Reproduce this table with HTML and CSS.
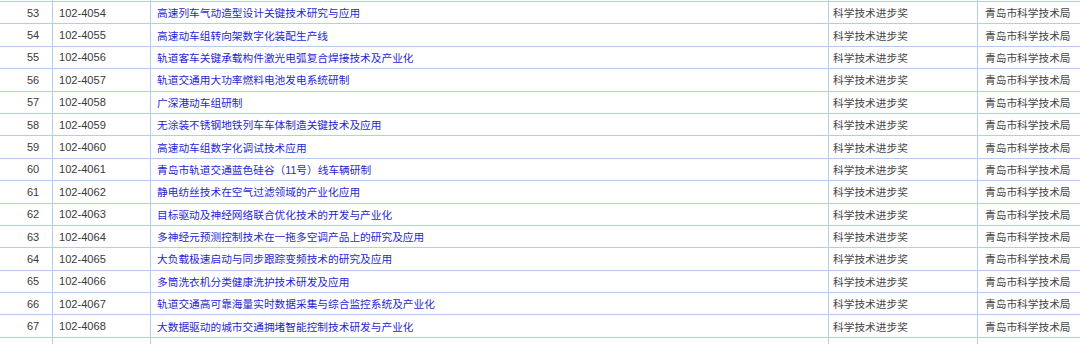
FILE: index.html
```html
<!DOCTYPE html>
<html lang="zh-CN">
<head>
<meta charset="utf-8">
<title>项目列表</title>
<link rel="stylesheet" href="styles.css">
</head>
<body>
<div class="viewport">
  <div class="table">
    <div class="row ghost"><div class="c1"></div><div class="c2"></div><div class="c3"></div><div class="c4"></div><div class="c5"></div></div>
    <div class="row"><div class="c1">53</div><div class="c2">102-4054</div><div class="c3">高速列车气动造型设计关键技术研究与应用</div><div class="c4">科学技术进步奖</div><div class="c5">青岛市科学技术局</div></div>
    <div class="row"><div class="c1">54</div><div class="c2">102-4055</div><div class="c3">高速动车组转向架数字化装配生产线</div><div class="c4">科学技术进步奖</div><div class="c5">青岛市科学技术局</div></div>
    <div class="row"><div class="c1">55</div><div class="c2">102-4056</div><div class="c3">轨道客车关键承载构件激光电弧复合焊接技术及产业化</div><div class="c4">科学技术进步奖</div><div class="c5">青岛市科学技术局</div></div>
    <div class="row"><div class="c1">56</div><div class="c2">102-4057</div><div class="c3">轨道交通用大功率燃料电池发电系统研制</div><div class="c4">科学技术进步奖</div><div class="c5">青岛市科学技术局</div></div>
    <div class="row"><div class="c1">57</div><div class="c2">102-4058</div><div class="c3">广深港动车组研制</div><div class="c4">科学技术进步奖</div><div class="c5">青岛市科学技术局</div></div>
    <div class="row"><div class="c1">58</div><div class="c2">102-4059</div><div class="c3">无涂装不锈钢地铁列车车体制造关键技术及应用</div><div class="c4">科学技术进步奖</div><div class="c5">青岛市科学技术局</div></div>
    <div class="row"><div class="c1">59</div><div class="c2">102-4060</div><div class="c3">高速动车组数字化调试技术应用</div><div class="c4">科学技术进步奖</div><div class="c5">青岛市科学技术局</div></div>
    <div class="row"><div class="c1">60</div><div class="c2">102-4061</div><div class="c3">青岛市轨道交通蓝色硅谷（11号）线车辆研制</div><div class="c4">科学技术进步奖</div><div class="c5">青岛市科学技术局</div></div>
    <div class="row"><div class="c1">61</div><div class="c2">102-4062</div><div class="c3">静电纺丝技术在空气过滤领域的产业化应用</div><div class="c4">科学技术进步奖</div><div class="c5">青岛市科学技术局</div></div>
    <div class="row"><div class="c1">62</div><div class="c2">102-4063</div><div class="c3">目标驱动及神经网络联合优化技术的开发与产业化</div><div class="c4">科学技术进步奖</div><div class="c5">青岛市科学技术局</div></div>
    <div class="row"><div class="c1">63</div><div class="c2">102-4064</div><div class="c3">多神经元预测控制技术在一拖多空调产品上的研究及应用</div><div class="c4">科学技术进步奖</div><div class="c5">青岛市科学技术局</div></div>
    <div class="row"><div class="c1">64</div><div class="c2">102-4065</div><div class="c3">大负载极速启动与同步跟踪变频技术的研究及应用</div><div class="c4">科学技术进步奖</div><div class="c5">青岛市科学技术局</div></div>
    <div class="row"><div class="c1">65</div><div class="c2">102-4066</div><div class="c3">多筒洗衣机分类健康洗护技术研发及应用</div><div class="c4">科学技术进步奖</div><div class="c5">青岛市科学技术局</div></div>
    <div class="row"><div class="c1">66</div><div class="c2">102-4067</div><div class="c3">轨道交通高可靠海量实时数据采集与综合监控系统及产业化</div><div class="c4">科学技术进步奖</div><div class="c5">青岛市科学技术局</div></div>
    <div class="row"><div class="c1">67</div><div class="c2">102-4068</div><div class="c3">大数据驱动的城市交通拥堵智能控制技术研发与产业化</div><div class="c4">科学技术进步奖</div><div class="c5">青岛市科学技术局</div></div>
    <div class="row"><div class="c1"></div><div class="c2"></div><div class="c3"></div><div class="c4"></div><div class="c5"></div></div>
  </div>
</div>
</body>
</html>
```

FILE: styles.css
```css
html, body {
  margin: 0;
  padding: 0;
  background: #ffffff;
}
.viewport {
  width: 1080px;
  height: 344px;
  overflow: hidden;
}
.table {
  margin-top: -20.4px;
  font-family: "Liberation Sans", "Noto Sans CJK SC", sans-serif;
  font-size: 10.7px;
  color: #3a3a3a;
}
.row {
  display: grid;
  grid-template-columns: 52px 98px 678px 149px 103px;
  height: 22.4px;
  box-sizing: border-box;
  border-bottom: 1px solid #b3cdee;
}
.row > div {
  display: flex;
  align-items: center;
  white-space: nowrap;
  overflow: hidden;
  box-sizing: border-box;
}
.c1 { padding-left: 27px; font-size: 11px; }
.c2 { padding-left: 6px; border-left: 1px solid #b3cdee; font-size: 11.1px; }
.c3 { padding-left: 6px; border-left: 1px solid #b3cdee; color: #1f1fdc; }
.c4 { padding-left: 4px; border-left: 1px solid #b3cdee; color: #454545; }
.c5 { padding-left: 7px; border-left: 1px solid #b3cdee; color: #454545; }
```
